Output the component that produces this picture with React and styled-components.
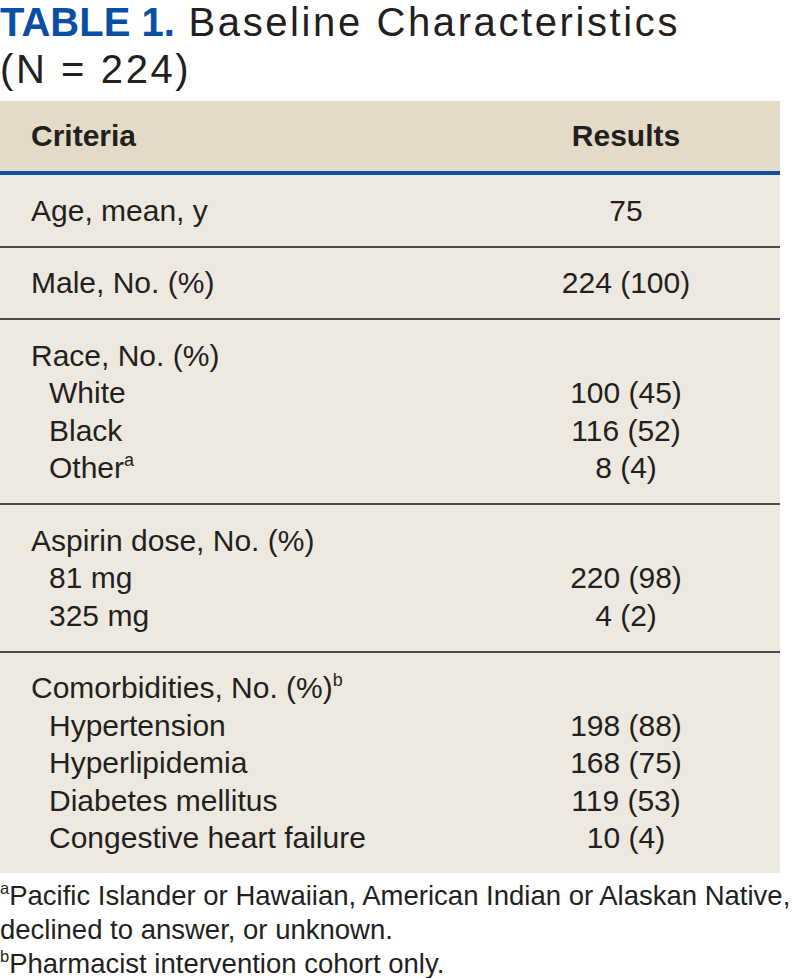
import React from "react";
import styled, { createGlobalStyle } from "styled-components";

const Global = createGlobalStyle`
  html, body { margin: 0; padding: 0; background: #ffffff; }
  body { font-family: "Liberation Sans", Arial, Helvetica, sans-serif; color: #231f20; }
`;

const Page = styled.div`
  width: 801px;
  display: flex;
  flex-direction: column;
`;

const Title = styled.h1`
  margin: 0 0 8px;
  font-size: 40px;
  font-weight: 400;
  letter-spacing: 2.6px;
  color: #231f20;
`;

const TitleLine = styled.div`
  white-space: nowrap;
  line-height: ${(p) => (p.$first ? "45px" : "48px")};
`;

const Label = styled.span`
  color: #0a4fa6;
  font-weight: 700;
  letter-spacing: 0;
`;

const Table = styled.div`
  width: 780px;
  display: flex;
  flex-direction: column;
`;

const HeadRow = styled.div`
  display: grid;
  grid-template-columns: 472px 1fr;
  background: #e3dac8;
  height: 70px;
  align-items: center;
  border-bottom: 4px solid #0a4fa6;
  font-weight: 700;
  font-size: 30px;
`;

const Row = styled.div`
  display: grid;
  grid-template-columns: 472px 1fr;
  background: #eee9e0;
  padding: 16.5px 0;
  font-size: 30px;
  line-height: 37.5px;
  border-bottom: ${(p) => (p.$last ? "none" : "2px solid #4a4a4a")};
`;

const Cell = styled.div`
  padding-left: ${(p) => (p.$right ? "0" : "31px")};
  text-align: ${(p) => (p.$right ? "center" : "left")};
`;

const Line = styled.div`
  padding-left: ${(p) => (p.$indent ? "18px" : "0")};
  white-space: nowrap;
`;

const Sup = styled.sup`
  font-size: 0.6em;
  line-height: 0;
  vertical-align: 0.65em;
`;

const Notes = styled.div`
  padding-top: 6px;
  font-size: 27.5px;
  line-height: 34px;
`;

const Note = styled.div`
  white-space: nowrap;
`;

const groups = [
  { rows: [["Age, mean, y", "75"]] },
  { rows: [["Male, No. (%)", "224 (100)"]] },
  {
    head: "Race, No. (%)",
    rows: [
      ["White", "100 (45)"],
      ["Black", "116 (52)"],
      ["Other", "8 (4)", "a"],
    ],
  },
  {
    head: "Aspirin dose, No. (%)",
    rows: [
      ["81 mg", "220 (98)"],
      ["325 mg", "4 (2)"],
    ],
  },
  {
    head: "Comorbidities, No. (%)",
    headSup: "b",
    rows: [
      ["Hypertension", "198 (88)"],
      ["Hyperlipidemia", "168 (75)"],
      ["Diabetes mellitus", "119 (53)"],
      ["Congestive heart failure", "10 (4)"],
    ],
  },
];

export default function App() {
  return (
    <Page>
      <Global />
      <Title>
        <TitleLine $first>
          <Label>TABLE 1.</Label> Baseline Characteristics
        </TitleLine>
        <TitleLine>(N = 224)</TitleLine>
      </Title>
      <Table>
        <HeadRow>
          <Cell>Criteria</Cell>
          <Cell $right>Results</Cell>
        </HeadRow>
        {groups.map((g, i) => (
          <Row key={i} $last={i === groups.length - 1}>
            <Cell>
              {g.head && (
                <Line>
                  {g.head}
                  {g.headSup && <Sup>{g.headSup}</Sup>}
                </Line>
              )}
              {g.rows.map((r, j) => (
                <Line key={j} $indent={!!g.head}>
                  {r[0]}
                  {r[2] && <Sup>{r[2]}</Sup>}
                </Line>
              ))}
            </Cell>
            <Cell $right>
              {g.head && <Line>&nbsp;</Line>}
              {g.rows.map((r, j) => (
                <Line key={j}>{r[1]}</Line>
              ))}
            </Cell>
          </Row>
        ))}
      </Table>
      <Notes>
        <Note>
          <Sup>a</Sup>Pacific Islander or Hawaiian, American Indian or Alaskan Native,
        </Note>
        <Note>declined to answer, or unknown.</Note>
        <Note>
          <Sup>b</Sup>Pharmacist intervention cohort only.
        </Note>
      </Notes>
    </Page>
  );
}
